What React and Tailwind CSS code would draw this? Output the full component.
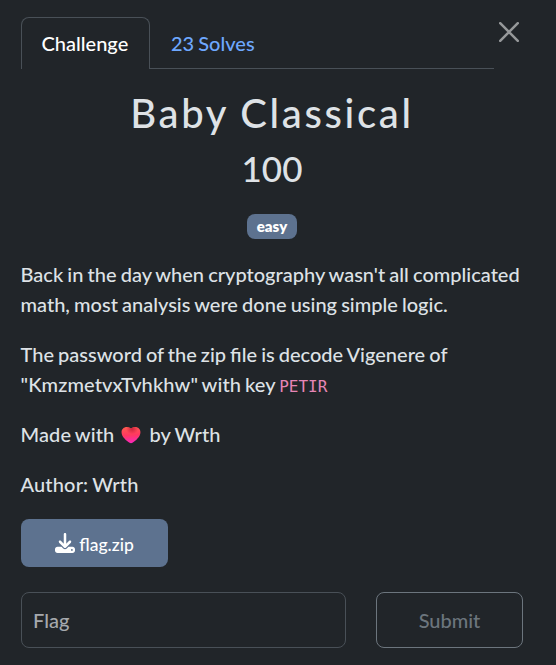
import { FaDownload } from "react-icons/fa6";

function Tabs() {
  return (
    <div className="flex pt-[17px] pl-[21px]">
      <div className="flex h-[52px] w-[473px]">
        <div className="flex w-[129px] items-center rounded-t-lg border border-b-0 border-[#495057] pb-[2px] pl-[19.5px] text-white">
          Challenge
        </div>
        <div className="flex-1 border-b border-[#495057] pt-[11px] pl-[21px] text-[#6ea8fe]">23 Solves</div>
      </div>
      <button type="button" aria-label="Close" className="mt-[5px] ml-[5px] h-5 w-5">
        <svg viewBox="0 0 20 20" className="h-5 w-5" fill="none" stroke="#96989a" strokeWidth="2.5" strokeLinecap="round">
          <path d="M1.2 1.2 18.8 18.8M18.8 1.2 1.2 18.8" />
        </svg>
      </button>
    </div>
  );
}

function Heart() {
  return (
    <svg viewBox="0 0 20 18" className="mr-1 ml-[3px] inline-block h-[17px] w-5 align-[-2px]">
      <defs>
        <linearGradient id="heart" x1="0.4" y1="0" x2="0.5" y2="1">
          <stop offset="0" stopColor="#ff5a4f" />
          <stop offset="0.5" stopColor="#ff3860" />
          <stop offset="1" stopColor="#f926c0" />
        </linearGradient>
        <radialGradient id="fold" cx="0.56" cy="0.12" r="0.32">
          <stop offset="0" stopColor="#c4163a" stopOpacity="0.8" />
          <stop offset="1" stopColor="#c4163a" stopOpacity="0" />
        </radialGradient>
      </defs>
      <path
        fill="url(#heart)"
        d="M10 1.500C8.500.5 7 0 5.500 0 2.500 0 0 2.300 0 5.500c0 5 5.500 9.200 8.500 11.300Q10 17.800 11.500 16.800C14.500 14.700 20 10.500 20 5.500 20 2.300 17.500 0 14.500 0 13 0 11.500.5 10 1.500Z"
      />
      <path
        fill="url(#fold)"
        d="M10 1.500C8.500.5 7 0 5.500 0 2.500 0 0 2.300 0 5.500c0 5 5.500 9.200 8.500 11.300Q10 17.800 11.500 16.800C14.500 14.700 20 10.500 20 5.500 20 2.300 17.500 0 14.500 0 13 0 11.500.5 10 1.500Z"
      />
    </svg>
  );
}

export default function App() {
  return (
    <div className="h-[665px] w-[556px] overflow-hidden bg-[#212529] font-[Lato,sans-serif] text-[20px] leading-[30px] font-medium text-[#dee2e6] [word-spacing:-1px]">
      <Tabs />
      <main className="pr-[33px] pl-[21px]">
        <h2 className="pt-5 text-center text-[40px] leading-[48px] font-medium tracking-[2.7px]">Baby Classical</h2>
        <h3 className="mt-[10px] text-center text-[35px] leading-[42px] font-medium">100</h3>
        <div className="mt-[25px] flex justify-center">
          <span className="flex h-[25px] w-[50px] items-center justify-center rounded-lg bg-[#5d728f] text-[15px] leading-[15px] font-extrabold text-white">
            easy
          </span>
        </div>
        <div className="mt-[20px] -ml-[0.5px] flex flex-col gap-5 whitespace-nowrap">
          <p className="[word-spacing:-0.9px]">
            Back in the day when cryptography wasn't all complicated
            <br />
            math, most analysis were done using simple logic.
          </p>
          <p>
            The password of the zip file is decode Vigenere of
            <br />
            <span className="tracking-[0.1px] [word-spacing:-1.2px]">"KmzmetvxTvhkhw" with key </span>
            <code className="font-['DejaVu_Sans_Mono',monospace] text-[16px] leading-4 font-normal text-[#e685b5]">PETIR</code>
          </p>
          <p>
            <span className="tracking-[0.1px]">Made with </span>
            <Heart /> <span className="tracking-[0.1px]">by Wrth</span>
          </p>
          <p className="tracking-[0.15px]">Author: Wrth</p>
        </div>
        <button
          type="button"
          className="mt-[20px] flex h-12 w-[147px] items-center justify-center gap-1 rounded-lg bg-[#5d728f] text-[17.5px] text-white"
        >
          <FaDownload className="h-5 w-5" />
          <span className="pt-[3px]">flag.zip</span>
        </button>
        <div className="mt-[25px] flex gap-[30px]">
          <input
            type="text"
            placeholder="Flag"
            className="h-14 w-[325px] rounded-lg border border-[#495057] bg-transparent px-[11px] placeholder:text-[#a6a9ad]"
          />
          <button type="button" className="h-14 w-[147px] rounded-lg border border-[#6c757d] text-[#6c757d]">
            Submit
          </button>
        </div>
      </main>
    </div>
  );
}
